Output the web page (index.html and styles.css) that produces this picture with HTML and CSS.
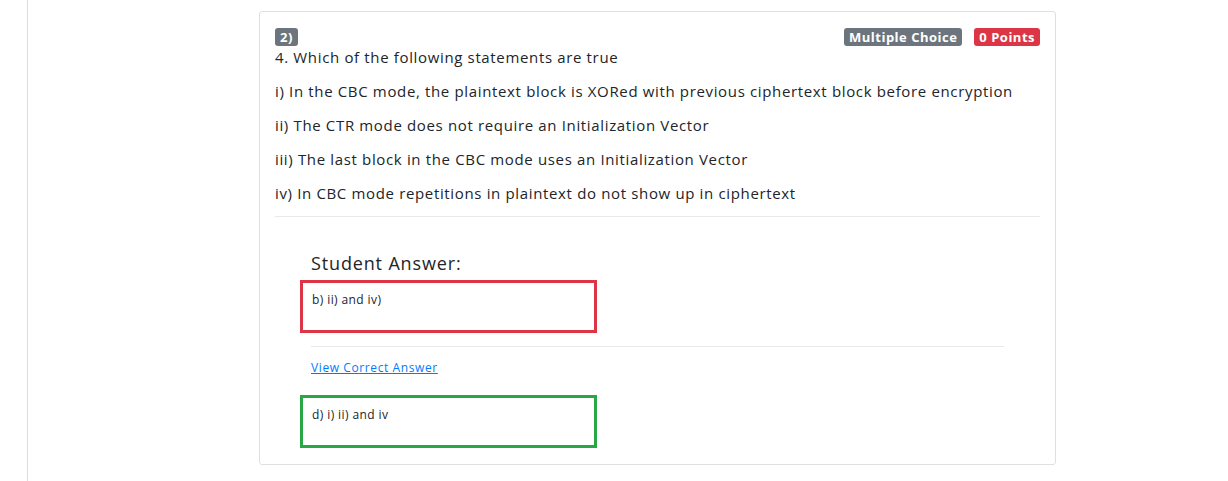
FILE: index.html
```html
<!DOCTYPE html>
<html>
<head>
<meta charset="utf-8">
<link rel="stylesheet" href="styles.css">
</head>
<body>
<div class="page">
  <div class="sidebar-edge"></div>
  <main class="main">
    <div class="card">
      <div class="card-head">
        <span class="badge badge-gray">2)</span>
        <div class="tags">
          <span class="badge badge-gray">Multiple Choice</span>
          <span class="badge badge-red">0 Points</span>
        </div>
      </div>
      <p class="q first">4. Which of the following statements are true</p>
      <p class="q">i) In the CBC mode, the plaintext block is XORed with previous ciphertext block before encryption</p>
      <p class="q">ii) The CTR mode does not require an Initialization Vector</p>
      <p class="q">iii) The last block in the CBC mode uses an Initialization Vector</p>
      <p class="q last">iv) In CBC mode repetitions in plaintext do not show up in ciphertext</p>
      <hr class="rule">
      <section class="answers">
        <h3 class="ans-title">Student Answer:</h3>
        <div class="ans-box wrong">b) ii) and iv)</div>
        <hr class="rule inner">
        <a class="view-link" href="#">View Correct Answer</a>
        <div class="ans-box right">d) i) ii) and iv</div>
      </section>
    </div>
  </main>
</div>
</body>
</html>
```
FILE: styles.css
```css
html, body {
  margin: 0;
  padding: 0;
  background: #fff;
}
body {
  font-family: "Open Sans", "Liberation Sans", sans-serif;
  color: #212529;
}
.page {
  display: flex;
  height: 481px;
}
.sidebar-edge {
  width: 27px;
  border-right: 1px solid #dcdcdc;
  flex: none;
}
.main {
  flex: 1;
  padding: 11px 0 0 231px;
}
.card {
  width: 765px;
  border: 1px solid #dfdfdf;
  border-radius: 3px;
  padding: 15px 15px 16px 15px;
}
.card-head {
  display: flex;
  justify-content: space-between;
  align-items: flex-start;
  height: 18px;
  padding-top: 1px;
}
.tags {
  display: flex;
  gap: 12px;
}
.badge {
  display: inline-block;
  font-size: 13px;
  font-weight: 700;
  line-height: 18px;
  height: 18px;
  padding: 0 5px;
  border-radius: 3px;
  color: #fff;
  letter-spacing: 0.5px;
}
.badge-gray { background: #6c757d; }
.badge-red { background: #dc3545; }
.q {
  margin: 0 0 16px 0;
  font-size: 15px;
  line-height: 18px;
  letter-spacing: 0.65px;
}
.q.first { margin-top: 2px; }
.q.last { margin-bottom: 14px; }
.rule {
  border: 0;
  border-top: 1px solid #e9e9e9;
  margin: 0;
}
.answers {
  padding: 35px 36px 0 36px;
}
.ans-title {
  margin: 0 0 6px 0;
  font-size: 18px;
  font-weight: 500;
  line-height: 22px;
  letter-spacing: 0.85px;
}
.ans-box {
  width: 273px;
  height: 39px;
  margin-left: -11px;
  padding: 8px 9px 0 9px;
  border: 3px solid;
  font-size: 12px;
  line-height: 18px;
  letter-spacing: 0.4px;
}
.ans-box.wrong { border-color: #dc3545; }
.ans-box.right { border-color: #28a745; }
.rule.inner { margin-top: 13px; }
.view-link {
  display: block;
  margin: 12px 0 18px 0;
  font-size: 12px;
  line-height: 18px;
  color: #007bff;
  text-decoration: underline;
  letter-spacing: 0.6px;
}
```
